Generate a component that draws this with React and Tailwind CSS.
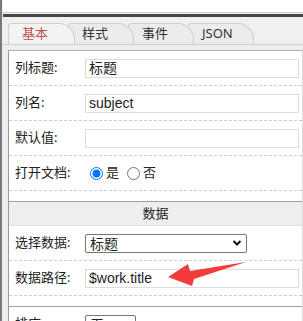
import React from 'react';

const font = { fontFamily: '"Noto Sans", "Noto Sans CJK SC", sans-serif' };

function Row({ label, children, last }) {
  return (
    <div className={`flex h-[35px] items-center border-b border-dashed border-[#cfcfcf] ${last ? '' : ''}`}>
      <div className="w-[76px] pl-[6px] text-[13px] text-[#222]">{label}</div>
      <div className="flex flex-1 items-center pr-[3px]">{children}</div>
    </div>
  );
}

function TextBox({ value }) {
  return (
    <div className="flex h-[19px] w-full items-center border border-[#dcdcdc] bg-white pl-[3px] text-[14px] text-[#222]" style={{ fontFamily: '"Liberation Sans", "Noto Sans CJK SC", sans-serif' }}>
      {value}
    </div>
  );
}

function SelectBox({ value, w }) {
  return (
    <div className={`flex h-[19px] ${w} items-center justify-between rounded-[2px] border border-[#767676] bg-white pl-[4px] pr-[4px] text-[14px] text-[#222]`}>
      <span>{value}</span>
      <svg width="10" height="8" viewBox="0 0 10 8">
        <path d="M1.5 2 L5 5.5 L8.5 2" fill="none" stroke="#111" strokeWidth="2" />
      </svg>
    </div>
  );
}

const tabs = ['基本', '样式', '事件', 'JSON'];

export default function App() {
  return (
    <div className="relative h-[321px] w-[303px] overflow-hidden border-l-2 border-[#7a7a7a] bg-[#eeeeee]" style={font}>
      <div className="ml-[1px] h-[13px] border-b border-[#cccccc] bg-white" />
      <div className="ml-[1px] mt-[1px] h-[3px] bg-[#474747]" />

      <div className="flex h-[28px] items-end border-b border-[#d0d0d0] bg-[#f0f0f0] pl-[6px]">
        {tabs.map((t, i) => (
          <div
            key={t}
            className={`flex h-[21px] items-center rounded-tl-[3px] rounded-tr-[16px] border border-b-0 border-[#cfcfcf] text-[13px] ${
              i === 0 ? 'z-40 w-[67px] bg-[#f3f3f3] pl-[13px] text-[#c0504d]' : 'w-[66px] bg-[#ececec] pl-[13px] text-[#333]'
            } ${i === 1 ? 'z-30 -ml-[7px]' : ''} ${i === 2 ? 'z-20 -ml-[6px]' : ''} ${i === 3 ? 'z-10 -ml-[6px]' : ''}`}
          >
            {t}
          </div>
        ))}
      </div>

      <div className="mt-[5px] ml-[6px] w-[295px] border-l border-t border-r border-l-[#9a9a9a] border-t-[#b0b0b0] border-r-[#dddddd] bg-white">
        <Row label="列标题:"><TextBox value="标题" /></Row>
        <Row label="列名:"><TextBox value="subject" /></Row>
        <Row label="默认值:"><TextBox value="" /></Row>
        <Row label="打开文档:">
          <label className="flex items-center text-[13px] text-[#222]">
            <input type="radio" name="open" defaultChecked className="m-0 ml-[5px] h-[13px] w-[13px]" />
            <span className="ml-[3px]">是</span>
          </label>
          <label className="ml-[8px] flex items-center text-[13px] text-[#222]">
            <input type="radio" name="open" className="m-0 h-[13px] w-[13px]" />
            <span className="ml-[3px]">否</span>
          </label>
        </Row>
        <div className="h-[10px]" />

        <div className="flex h-[25px] items-center justify-center border-t border-b border-t-[#a0a0a0] border-b-[#e2e2e2] bg-[#eeeeee] text-[13px] text-[#222]">
          数据
        </div>
        <Row label="选择数据:"><SelectBox value="标题" w="w-[162px]" /></Row>
        <Row label="数据路径:"><TextBox value="$work.title" /></Row>
        <div className="h-[10px]" />

        <div className="flex h-[35px] items-center border-t border-[#a0a0a0]">
          <div className="w-[76px] pl-[6px] text-[13px] text-[#222]">排序:</div>
          <SelectBox value="无" w="w-[51px]" />
        </div>
      </div>

      <svg className="absolute left-0 top-0" width="303" height="321" viewBox="0 0 303 321">
        <polygon points="166,277 186,264 188,271 244,262 192,279 190,286" fill="#f23b3b" />
      </svg>
    </div>
  );
}
